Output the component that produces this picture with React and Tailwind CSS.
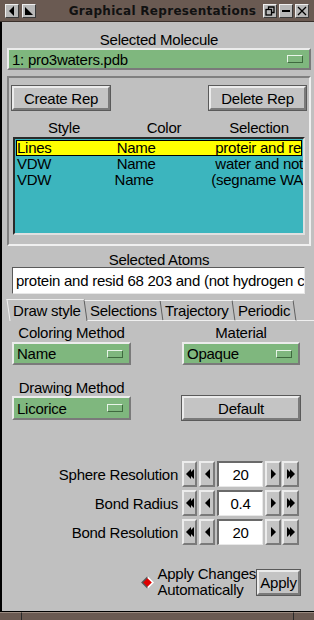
import React from "react";

const font = { fontFamily: '"Liberation Sans", Arial, sans-serif' };

function Raised({ className = "", children }) {
  return (
    <div
      className={
        "border-t-2 border-l-2 border-b-2 border-r-2 border-t-[#ececec] border-l-[#ececec] border-b-[#7a7a7a] border-r-[#7a7a7a] " +
        className
      }
    >
      {children}
    </div>
  );
}

function MenuButton({ label, className = "" }) {
  return (
    <Raised className={"bg-[#7fb77e] flex items-center justify-between pl-[3px] pr-[6px] " + className}>
      <span className="text-[15px] leading-none text-black">{label}</span>
      <span className="w-[16px] h-[8px] border border-t-[#e8f4e8] border-l-[#e8f4e8] border-b-[#3f6a3f] border-r-[#3f6a3f]" />
    </Raised>
  );
}

function Button({ label, className = "" }) {
  return (
    <Raised className={"bg-[#c4c4c4] flex items-center justify-center outline outline-1 outline-[#5a5a5a] " + className}>
      <span className="text-[15px] leading-none text-black">{label}</span>
    </Raised>
  );
}

function Arrow({ dir, double }) {
  const pts = dir === "left" ? "6,1 1,6 6,11" : "1,1 6,6 1,11";
  const pts2 = dir === "left" ? "9,1 4,6 9,11" : "4,1 9,6 4,11";
  return (
    <svg width={double ? 10 : 7} height="12" viewBox={double ? "0 0 10 12" : "0 0 7 12"}>
      <polygon points={pts} fill="#000" />
      {double && <polygon points={pts2} fill="#000" />}
    </svg>
  );
}

function SpinBtn({ dir, double, className = "" }) {
  return (
    <Raised className={"h-[26px] bg-[#c4c4c4] flex items-center justify-center " + className}>
      <Arrow dir={dir} double={double} />
    </Raised>
  );
}

function SpinRow({ label, value }) {
  return (
    <div className="flex items-center h-[26px]">
      <span className="flex-1 text-right pr-[4px] text-[15px] text-black leading-none">{label}</span>
      <SpinBtn dir="left" double className="w-[15px]" />
      <SpinBtn dir="left" className="w-[16px] ml-[2px]" />
      <div className="ml-[2px] w-[46px] h-[26px] bg-white border-t-2 border-l-2 border-t-[#6a6a6a] border-l-[#6a6a6a] border-b border-r border-b-[#e8e8e8] border-r-[#e8e8e8] flex items-center justify-center text-[15px] leading-none">
        {value}
      </div>
      <SpinBtn dir="right" className="w-[16px] ml-[2px]" />
      <SpinBtn dir="right" double className="w-[17px] ml-[1px]" />
      <div className="w-[12px]" />
    </div>
  );
}

function TitleBtn({ children }) {
  return (
    <div className="w-[14px] h-[14px] bg-[#b8b8b8] border border-t-[#efefef] border-l-[#efefef] border-b-[#3a3a3a] border-r-[#3a3a3a] flex items-center justify-center">
      {children}
    </div>
  );
}

function Tab({ label, active }) {
  return (
    <div
      className={
        "px-[4px] flex items-center border-t border-r border-t-[#f0f0f0] border-r-[#606060] skew-x-[8deg] " +
        (active ? "h-[22px] border-l border-l-[#f0f0f0]" : "h-[21px] border-b border-b-[#f0f0f0]")
      }
    >
      <span className="-skew-x-[8deg]">{label}</span>
    </div>
  );
}

export default function App() {
  return (
    <div className="w-[314px] h-[620px] flex flex-col bg-[#c0c0c0] overflow-hidden" style={font}>
      {/* title bar */}
      <div className="h-[22px] bg-[#6a5a52] flex items-center px-[5px] border-b border-[#3a302b]">
        <div className="flex gap-[3px]">
          <TitleBtn>
            <svg width="10" height="10" viewBox="0 0 10 10"><polygon points="7,0 2,5 7,10" fill="#000" /></svg>
          </TitleBtn>
          <TitleBtn>
            <svg width="10" height="10" viewBox="0 0 10 10"><polygon points="1,1 9,9 1,9" fill="#000" /></svg>
          </TitleBtn>
        </div>
        <div
          className="flex-1 text-center whitespace-nowrap text-[12px] font-bold text-[#111] tracking-[0.3px] pl-[26px]"
          style={{ fontFamily: '"DejaVu Sans", sans-serif' }}
        >
          Graphical Representations
        </div>
        <div className="flex gap-[2px]">
          <TitleBtn>
            <svg width="10" height="10" viewBox="0 0 10 10" fill="none" stroke="#000" strokeWidth="1.3">
              <rect x="1" y="3.5" width="5.5" height="5.5" />
              <path d="M3.5 3.5V1H9V6.5H6.5" />
            </svg>
          </TitleBtn>
          <TitleBtn>
            <svg width="10" height="10" viewBox="0 0 10 10"><rect x="1" y="4" width="8" height="2" fill="#000" /></svg>
          </TitleBtn>
          <TitleBtn>
            <svg width="10" height="10" viewBox="0 0 10 10" stroke="#000" strokeWidth="1.3"><path d="M1 1L9 9M9 1L1 9" /></svg>
          </TitleBtn>
        </div>
      </div>

      {/* body */}
      <div className="flex-1 border-l-2 border-black flex flex-col pl-[5px] pr-[3px] text-black tracking-[-0.25px]">
        <div className="text-center text-[15px] leading-none mt-[10px] mb-[1px]">Selected Molecule</div>
        <MenuButton label="1: pro3waters.pdb" className="h-[22px]" />

        {/* rep frame */}
        <div className="mt-[6px] h-[170px] border-2 border-t-[#808080] border-l-[#808080] border-b-[#f0f0f0] border-r-[#f0f0f0] px-[3px] pt-[8px] flex flex-col">
          <div className="flex justify-between">
            <Button label="Create Rep" className="w-[98px] h-[24px]" />
            <Button label="Delete Rep" className="w-[97px] h-[24px]" />
          </div>
          <div className="flex text-[15px] leading-none mt-[10px] mb-[2px]">
            <span className="w-[104px] text-center">Style</span>
            <span className="w-[96px] text-center">Color</span>
            <span className="flex-1 text-center">Selection</span>
          </div>
          <div className="h-[98px] mx-[1px] bg-[#3cb5be] border-2 border-t-[#2a2a2a] border-l-[#2a2a2a] border-b-[#e0e0e0] border-r-[#e0e0e0] pt-[1px] text-[15px] leading-[16px] overflow-hidden">
            <div className="flex bg-[#ffff00] border border-black h-[16px] mx-[1px] items-center whitespace-nowrap overflow-hidden">
              <span className="w-[101px]">Lines</span>
              <span className="w-[100px]">Name</span>
              <span>proteir and re</span>
            </div>
            <div className="flex pl-[2px] whitespace-nowrap overflow-hidden">
              <span className="w-[101px]">VDW</span>
              <span className="w-[100px]">Name</span>
              <span>water and not</span>
            </div>
            <div className="flex pl-[2px] whitespace-nowrap overflow-hidden">
              <span className="w-[101px]">VDW</span>
              <span className="w-[100px]">Name</span>
              <span>(segname WA</span>
            </div>
          </div>
        </div>

        <div className="text-center text-[15px] leading-none mt-[6px]">Selected Atoms</div>
        <div className="ml-[5px] mr-[6px] h-[27px] bg-white border border-t-[#5a5a5a] border-l-[#5a5a5a] border-b-[#e8e8e8] border-r-[#e8e8e8] flex items-center pl-[3px] overflow-hidden whitespace-nowrap text-[15px] leading-none">
          protein and resid 68 203 and (not hydrogen c
        </div>

        {/* tabs */}
        <div className="mt-[5px] h-[22px] flex items-end -mr-[3px]">
          <div className="flex items-end h-full pl-[1px] text-[15px] leading-none">
            <Tab label="Draw style" active />
            <Tab label="Selections" />
            <Tab label="Trajectory" />
            <Tab label="Periodic" />
          </div>
          <div className="flex-1 border-b border-[#f0f0f0]" />
        </div>

        {/* draw style */}
        <div className="flex mt-[4px] pl-[5px] pr-[11px]">
          <div className="w-[119px] flex flex-col">
            <div className="text-center text-[15px] leading-none mb-[2px]">Coloring Method</div>
            <MenuButton label="Name" className="h-[23px]" />
            <div className="text-center text-[15px] leading-none mt-[15px] mb-[1px]">Drawing Method</div>
            <MenuButton label="Licorice" className="h-[24px]" />
          </div>
          <div className="flex-1" />
          <div className="w-[118px] flex flex-col">
            <div className="text-center text-[15px] leading-none mb-[2px]">Material</div>
            <MenuButton label="Opaque" className="h-[23px]" />
            <div className="h-[31px]" />
            <Button label="Default" className="h-[24px]" />
          </div>
        </div>

        <div className="mt-[41px] flex flex-col gap-[3px]">
          <SpinRow label="Sphere Resolution" value="20" />
          <SpinRow label="Bond Radius" value="0.4" />
          <SpinRow label="Bond Resolution" value="20" />
        </div>

        <div className="mt-[21px] flex items-center justify-end pr-[11px]">
          <svg width="13" height="13" viewBox="0 0 12 12" className="mr-[4px]">
            <polygon points="6,0 12,6 6,12 0,6" fill="#ffffff" />
            <polygon points="6,0 0,6 6,12" fill="#555" />
            <polygon points="6,2 10,6 6,10 2,6" fill="#e00000" />
          </svg>
          <div className="text-[15px] leading-[16px] mr-[1px]">
            <div>Apply Changes</div>
            <div>Automatically</div>
          </div>
          <Button label="Apply" className="w-[43px] h-[25px]" />
        </div>
      </div>

      {/* bottom frame */}
      <div className="h-[9px] border-t border-black bg-[#6a5a52] flex">
        <div className="w-[22px] border-r border-[#2a2a2a] border-t border-t-[#9a8a80]" />
        <div className="flex-1 border-r border-[#2a2a2a] border-t border-t-[#9a8a80]" />
        <div className="w-[20px] border-t border-t-[#9a8a80]" />
      </div>
    </div>
  );
}
